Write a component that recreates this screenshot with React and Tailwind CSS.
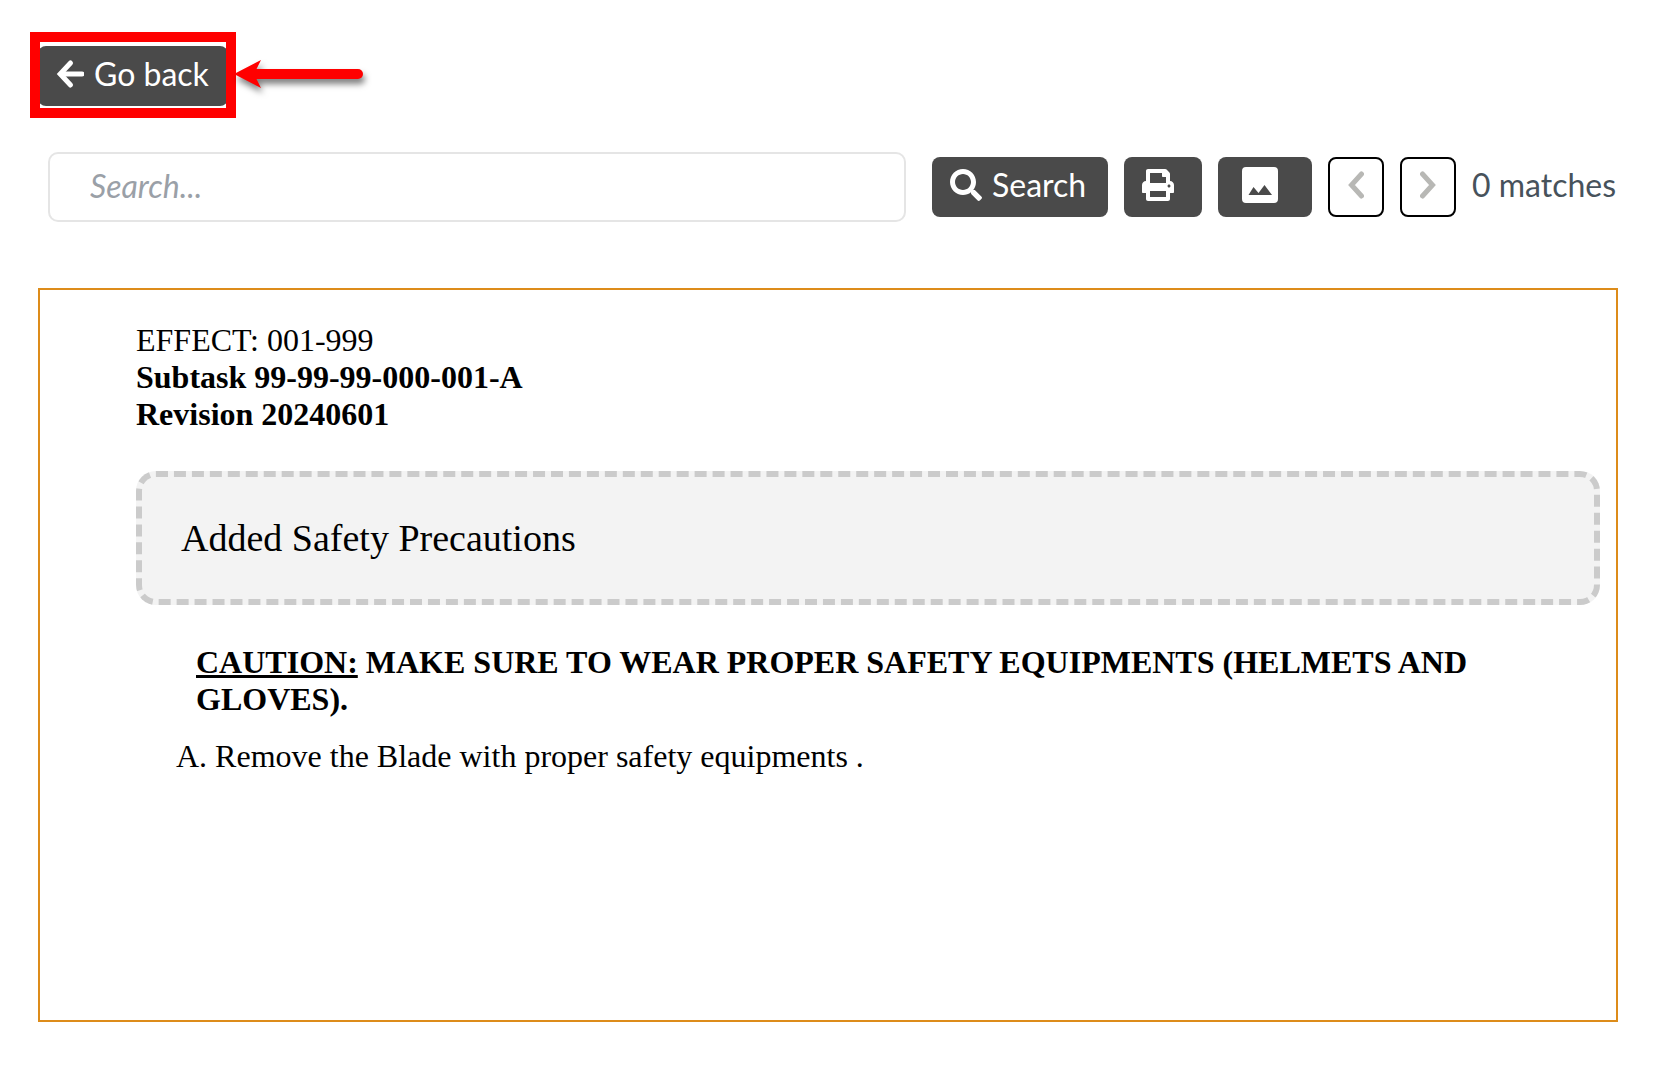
import React from 'react';
import { FaPrint, FaSearch } from 'react-icons/fa';

const darkButton = 'flex h-[60px] items-center rounded-lg bg-[#4a4a4a] pb-1 text-white';
const navButton = 'flex h-[60px] w-14 items-center justify-center rounded-lg border-2 border-black bg-white pb-1 text-[#b8b8b5]';

function BackIcon() {
  return (
    <svg viewBox="0 0 28 32" className="h-8 w-7 shrink-0" fill="none" stroke="currentColor" strokeWidth="5" strokeLinecap="round" aria-hidden="true">
      <path d="M14.500 5L4.200 16L14.500 27" />
      <path d="M5 16H26" />
    </svg>
  );
}

function Chevron({ d }) {
  return (
    <svg viewBox="0 0 16 32" className="h-8 w-4" fill="none" stroke="currentColor" strokeWidth="5" strokeLinecap="round" aria-hidden="true">
      <path d={d} />
    </svg>
  );
}

function ImageIcon() {
  return (
    <svg viewBox="0 0 36 36" className="size-9" aria-hidden="true">
      <path
        fill="currentColor"
        fillRule="evenodd"
        d="M4 0h28a4 4 0 0 1 4 4v28a4 4 0 0 1-4 4H4a4 4 0 0 1-4-4V4a4 4 0 0 1 4-4zM6.500 28h23.500L22.500 18l-6 8-5-6z"
      />
    </svg>
  );
}

function Arrow() {
  return (
    <svg
      viewBox="0 0 140 50"
      className="absolute top-1 left-[196px] h-[50px] w-[140px] drop-shadow-[2px_5px_3px_rgba(0,0,0,0.5)]"
      aria-hidden="true"
    >
      <path d="M22 24H124" stroke="#ff0000" strokeWidth="10" strokeLinecap="round" />
      <path d="M0 24L27 10L20 24L27 38Z" fill="#ff0000" />
    </svg>
  );
}

export default function App() {
  return (
    <main className="min-h-screen bg-white pt-[46px] pr-[52px] pb-12 pl-[38px] font-['Lato',sans-serif] text-[32px] leading-9">
      {/* Go back, with the callout on top of it */}
      <div className="relative w-fit">
        <button type="button" className={`${darkButton} w-[190px] gap-[10px] pl-[18px]`}>
          <BackIcon />
          <span className="whitespace-nowrap">Go back</span>
        </button>
        <span className="pointer-events-none absolute -top-[14px] -right-2 -bottom-3 -left-2 border-[10px] border-[#ff0000]" />
        <Arrow />
      </div>

      {/* Toolbar */}
      <form className="mt-[46px] flex items-center gap-4" onSubmit={(e) => e.preventDefault()}>
        <input
          type="text"
          aria-label="Search"
          placeholder="Search..."
          className="mr-[10px] ml-[10px] h-[70px] min-w-0 flex-1 rounded-[10px] border-2 border-[#e5e5e5] px-10 pb-1 placeholder:text-[#9aa0a7] placeholder:italic"
        />
        <button type="submit" className={`${darkButton} w-[176px] gap-[10px] pl-[18px]`}>
          <FaSearch className="size-8 shrink-0" />
          <span>Search</span>
        </button>
        <button type="button" aria-label="Print" className={`${darkButton} w-[78px] pl-[18px]`}>
          <FaPrint className="size-8" />
        </button>
        <button type="button" aria-label="Images" className={`${darkButton} w-[94px] pl-6`}>
          <ImageIcon />
        </button>
        <button type="button" aria-label="Previous match" className={navButton}>
          <Chevron d="M13.500 5L3.500 16L13.500 27" />
        </button>
        <button type="button" aria-label="Next match" className={navButton}>
          <Chevron d="M2.500 5L12.500 16L2.500 27" />
        </button>
        <span className="w-[146px] pb-1 whitespace-nowrap text-[#47525b]">0 matches</span>
      </form>

      {/* Document */}
      <article className="mt-[66px] min-h-[734px] border-2 border-[#dd8c1a] pt-8 pr-4 pl-24 font-['Liberation_Serif',serif] text-[32px] leading-[37px] text-black">
        <p>EFFECT: 001-999</p>
        <p className="font-bold">Subtask 99-99-99-000-001-A</p>
        <p className="font-bold">Revision 20240601</p>

        <div className="mt-[38px] flex h-[134px] items-center rounded-[20px] border-[6px] border-dashed border-[#cbcbcb] bg-[#f3f3f3] pl-[39px]">
          <h2 className="text-[38px] leading-[44px]">Added Safety Precautions</h2>
        </div>

        <p className="mt-[39px] pr-10 pl-[60px] font-bold">
          <span className="underline decoration-[3px] underline-offset-2">CAUTION:</span> MAKE SURE TO WEAR PROPER SAFETY EQUIPMENTS (HELMETS AND GLOVES).
        </p>
        <p className="mt-5 pl-10">A. Remove the Blade with proper safety equipments .</p>
      </article>
    </main>
  );
}
